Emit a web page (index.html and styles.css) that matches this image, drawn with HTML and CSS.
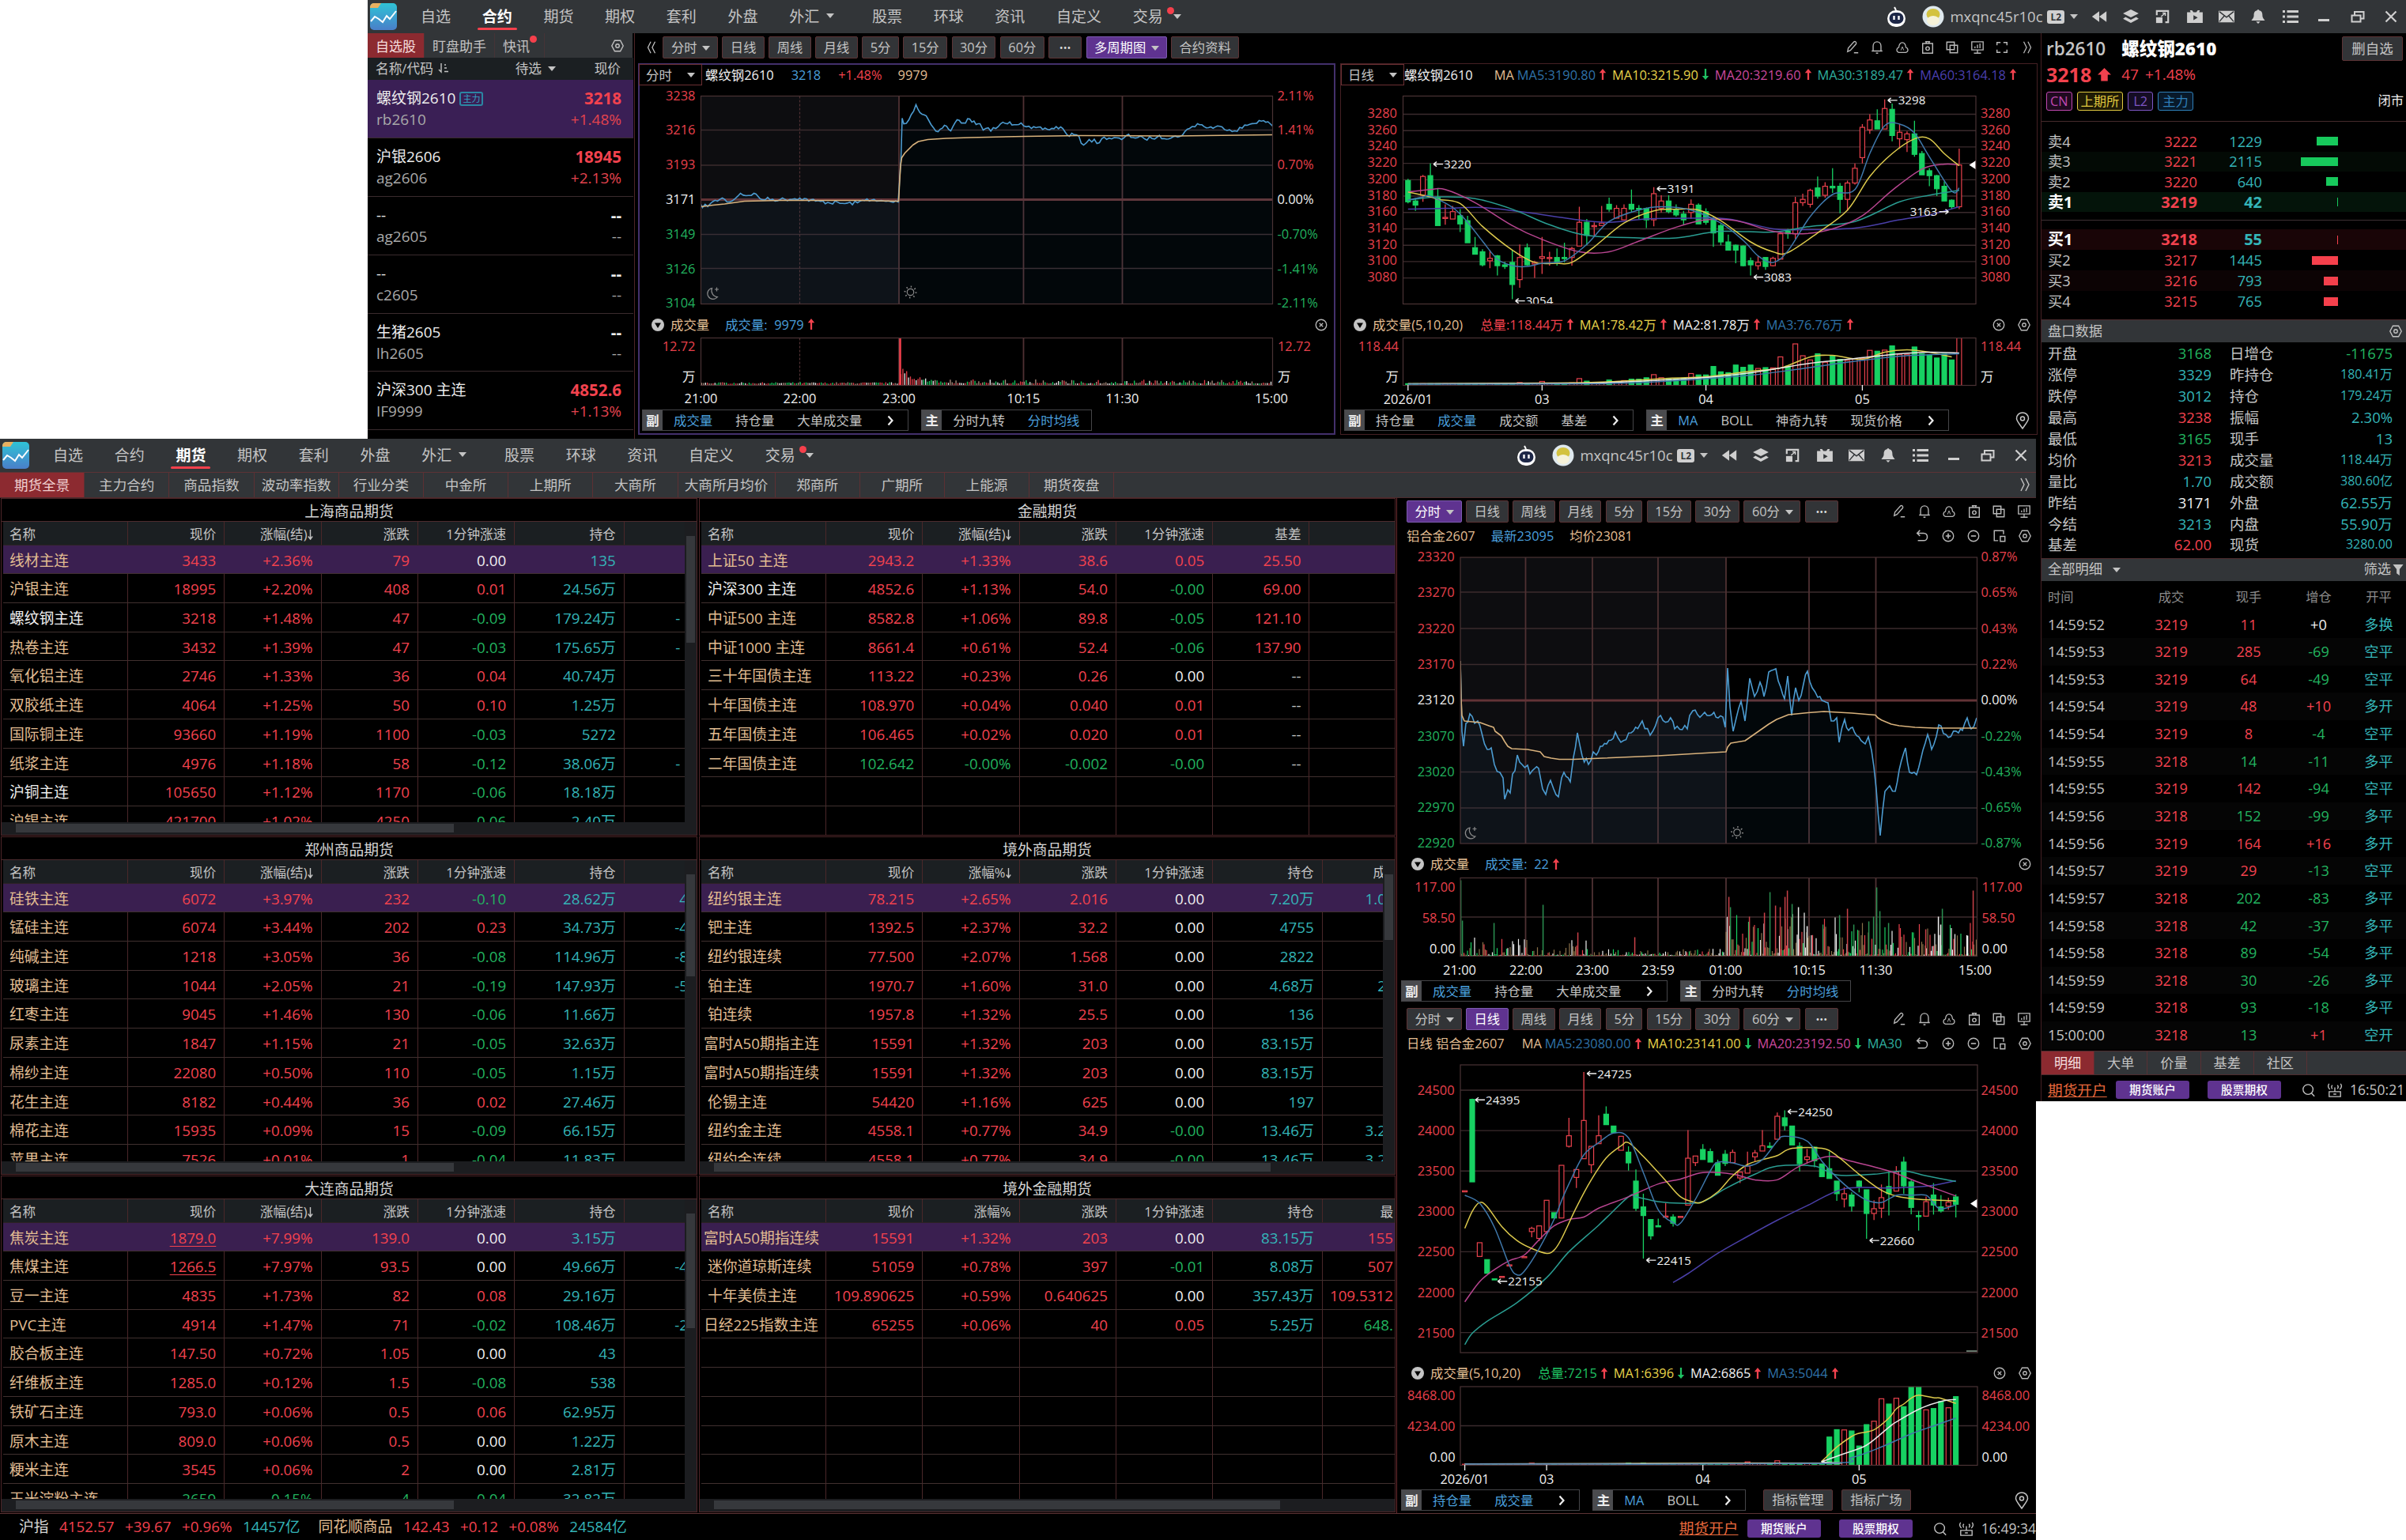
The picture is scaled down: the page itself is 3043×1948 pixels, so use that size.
FILE: index.html
```html
<!DOCTYPE html>
<html lang="zh-CN">
<head>
	<meta charset="utf-8">
	<title>期货行情</title>
	<link rel="stylesheet" href="styles.css">
</head>
<body>
<svg class="sprite" width="0" height="0">
	<defs>
		<linearGradient id="logoBg" x1="0" y1="0" x2="0" y2="1"><stop offset="0" stop-color="#2fc3d6"/><stop offset="1" stop-color="#4a7fc9"/></linearGradient>
	</defs>
	<symbol id="i-logo" viewBox="0 0 34 34"><rect width="34" height="34" rx="5" fill="url(#logoBg)"/><path d="M0 5a5 5 0 0 1 5-5h9l-4 6H0z" fill="#e8b060"/><path d="M1 23l5-6 5 3 5 4 5-8 4 4 8-10" fill="none" stroke="#fff" stroke-width="2"/></symbol>
	<symbol id="i-robot" viewBox="0 0 27 27"><path d="M13 5l-2-4" stroke="#fff" stroke-width="2"/><rect x="2" y="5" width="23" height="21" rx="10.5" fill="#fff"/><rect x="4.500" y="8" width="18" height="14" rx="7" fill="#1d2747"/><path d="M10.500 12v5M16.500 12v5" stroke="#fff" stroke-width="2.400"/></symbol>
	<symbol id="i-avatar" viewBox="0 0 28 28"><circle cx="14" cy="14" r="13.500" fill="#dfe9ee"/><ellipse cx="14" cy="11" rx="8.500" ry="7" fill="#d3c23f"/><ellipse cx="14" cy="19" rx="8" ry="6" fill="#f6f2d8"/></symbol>
	<symbol id="i-back" viewBox="0 0 24 20"><path d="M12 2v16L1 10zM23 2v16L12 10z"/></symbol>
	<symbol id="i-layers" viewBox="0 0 22 20"><path d="M11 0l11 5.500-11 5.500L0 5.500z"/><path d="M3.500 10.500L11 14.500l7.500-4L22 13l-11 6L0 13z"/></symbol>
	<symbol id="i-app" viewBox="0 0 20 20"><path d="M2 8V2h16v16h-4" fill="none" stroke="currentColor" stroke-width="2.400"/><path d="M1 11h9v8H1z"/><path d="M8 10l6-5M14 9V5h-4" fill="none" stroke="currentColor" stroke-width="1.600"/></symbol>
	<symbol id="i-tv" viewBox="0 0 22 20"><path fill-rule="evenodd" d="M0 4h5L4 1h3l2 3h4l2-3h3l-1 3h5v15H0zM9 8v7l6-3.500z"/></symbol>
	<symbol id="i-mail" viewBox="0 0 22 18"><path fill-rule="evenodd" d="M0 1h22v16H0z"/><path d="M1 2l10 8L21 2M1 16l7-8M21 16l-7-8" fill="none" stroke="#323538" stroke-width="1.600"/></symbol>
	<symbol id="i-bellf" viewBox="0 0 20 20"><path d="M10 0c1 0 1.500 1 1.500 1.500C15 2 16 5 16 8c0 4 2 5 3.500 7.500H.5C2 13 4 12 4 8c0-3 1-6 4.500-6.500C8.500 1 9 0 10 0zM7 17h6l-3 3z"/></symbol>
	<symbol id="i-list" viewBox="0 0 20 18"><path d="M0 1h3v3H0zM0 7.500h3v3H0zM0 14h3v3H0zM5.500 1H20v3H5.500zM5.500 7.500H20v3H5.500zM5.500 14H20v3H5.500z"/></symbol>
	<symbol id="i-min" viewBox="0 0 16 16"><path d="M1 11h14v3H1z"/></symbol>
	<symbol id="i-restore" viewBox="0 0 18 16"><path d="M1.500 6.500h11v8h-11zM5 6V2h11.500v8.500H13" fill="none" stroke="currentColor" stroke-width="2"/></symbol>
	<symbol id="i-close" viewBox="0 0 16 16"><path d="M1.500 1.500l13 13M14.500 1.500l-13 13" fill="none" stroke="currentColor" stroke-width="2.200"/></symbol>
	<symbol id="i-pen" viewBox="0 0 20 20"><path d="M3 16l1-5 8-9c2-1 4 1 3 3l-8 9zM12 17.500h6" fill="none" stroke="currentColor" stroke-width="1.500"/></symbol>
	<symbol id="i-bell" viewBox="0 0 20 20"><path d="M2.500 15h15M4.500 15V8c0-8 11-8 11 0v7M8.500 18h3" fill="none" stroke="currentColor" stroke-width="1.500"/></symbol>
	<symbol id="i-cloud" viewBox="0 0 20 20"><path d="M5 17c-4-1-3.500-6 0-7C6 1 14 1 15 10c3.500 1 4 6 0 7z" fill="none" stroke="currentColor" stroke-width="1.400"/><path d="M8 14l2-5 2 5" fill="none" stroke="currentColor"/></symbol>
	<symbol id="i-shot" viewBox="0 0 20 20"><path d="M3 4.500h14V18H3zM6.500 2h7M8 2v3M12 2v3" fill="none" stroke="currentColor" stroke-width="1.600"/><circle cx="10" cy="11.500" r="2.500" fill="none" stroke="currentColor" stroke-width="1.600"/></symbol>
	<symbol id="i-copy" viewBox="0 0 20 20"><path d="M2.500 2.500H13V13H2.500zM7 7h10.500v10.500H7z" fill="none" stroke="currentColor" stroke-width="1.600"/></symbol>
	<symbol id="i-screen" viewBox="0 0 20 20"><path d="M2 2h16v11.500H2zM5 18h10M10 14v4M6.500 11V8.500M10 11V6M13.500 11V4.500" fill="none" stroke="currentColor" stroke-width="1.500"/></symbol>
	<symbol id="i-expand" viewBox="0 0 20 20"><path d="M3 7V3h5M12 3h5v4M3 13v4h5M12 17h5v-4" fill="none" stroke="currentColor" stroke-width="1.600"/></symbol>
	<symbol id="i-right2" viewBox="0 0 20 20"><path d="M5 2l4 8-4 8M11 2l4 8-4 8" fill="none" stroke="currentColor" stroke-width="1.400"/></symbol>
	<symbol id="i-left2" viewBox="0 0 20 20"><path d="M9 2l-4 8 4 8M15 2l-4 8 4 8" fill="none" stroke="currentColor" stroke-width="1.400"/></symbol>
	<symbol id="i-hex" viewBox="0 0 20 20"><path d="M6 2.500h8l4 7.500-4 7.500H6L2 10z" fill="none" stroke="currentColor" stroke-width="1.500"/><circle cx="10" cy="10" r="2.500" fill="none" stroke="currentColor" stroke-width="1.500"/></symbol>
	<symbol id="i-cx" viewBox="0 0 20 20"><circle cx="10" cy="10" r="7.500" fill="none" stroke="currentColor" stroke-width="1.500"/><path d="M7.500 7.500l5 5M12.500 7.500l-5 5" stroke="currentColor" stroke-width="1.500"/></symbol>
	<symbol id="i-plus" viewBox="0 0 20 20"><circle cx="10" cy="10" r="7.500" fill="none" stroke="currentColor" stroke-width="1.500"/><path d="M6.500 10h7M10 6.500v7" stroke="currentColor" stroke-width="1.800"/></symbol>
	<symbol id="i-minus" viewBox="0 0 20 20"><circle cx="10" cy="10" r="7.500" fill="none" stroke="currentColor" stroke-width="1.500"/><path d="M6.500 10h7" stroke="currentColor" stroke-width="1.800"/></symbol>
	<symbol id="i-undo" viewBox="0 0 20 20"><path d="M7 2L3 6l4 4M3 6h9c7 0 7 10.500 0 10.500H4" fill="none" stroke="currentColor" stroke-width="1.700"/></symbol>
	<symbol id="i-pip" viewBox="0 0 20 20"><path d="M8 16.500H2.500v-14h13v5M11 10.500h6.500v7H11z" fill="none" stroke="currentColor" stroke-width="1.600"/></symbol>
	<symbol id="i-down" viewBox="0 0 16 16"><circle cx="8" cy="8" r="8"/><path d="M4 5.500h8L8 12z" fill="#000"/></symbol>
	<symbol id="i-chev" viewBox="0 0 14 16"><path d="M4.500 2.500l5 5.500-5 5.500" fill="none" stroke="currentColor" stroke-width="2.200"/></symbol>
	<symbol id="i-pin" viewBox="0 0 20 24"><path d="M10 22C5 15 2.500 12 2.500 9.500c0-10 15-10 15 0C17.500 12 15 15 10 22z" fill="none" stroke="currentColor" stroke-width="1.500"/><circle cx="10" cy="9.500" r="2.500" fill="none" stroke="currentColor" stroke-width="1.500"/></symbol>
	<symbol id="i-search" viewBox="0 0 20 20"><circle cx="9" cy="9" r="7" fill="none" stroke="currentColor" stroke-width="1.500"/><path d="M14 14.500l4 4" stroke="currentColor" stroke-width="1.600"/></symbol>
	<symbol id="i-net" viewBox="0 0 20 20"><path d="M2 19v-7h16v7zM10 12V6M6.500 8c-1.500-1.500-1.500-3.500 0-5M13.500 8c1.500-1.500 1.500-3.500 0-5M3 9C0 6 0 3.500 2 1M17 9c3-3 3-5.500 1-8M8 15.500h4" fill="none" stroke="currentColor" stroke-width="1.500"/></symbol>
	<symbol id="i-funnel" viewBox="0 0 14 16"><path d="M0 1h14L9 7.500V16l-4-3V7.500z"/></symbol>
	<symbol id="i-sort" viewBox="0 0 14 14"><path d="M4 1v11L1 9M8 3h2M8 7h3M8 11.500h5" fill="none" stroke="currentColor" stroke-width="1.400"/></symbol>
	<symbol id="i-srt" viewBox="0 0 7 14"><path d="M3.500 1v12L.8 9.500M3.500 13l2.700-3.500" fill="none" stroke="currentColor" stroke-width="1.400"/></symbol>
	<symbol id="i-up" viewBox="0 0 10 16"><path d="M5 0l4.500 5.500H6.200V15H3.800V5.500H.5z"/></symbol>
	<symbol id="i-dn" viewBox="0 0 10 16"><path d="M5 15L.5 9.500h3.300V0h2.400v9.500h3.300z"/></symbol>
	<symbol id="i-bigup" viewBox="0 0 18 18"><path d="M9 0l9 9h-4.500v8.500h-9V9H0z"/></symbol>
</svg>

<div class="desktop">

	<!-- 合约 -->
	<section class="win win-a">
		<header class="bar">
			<svg class="logo"><use href="#i-logo"/></svg>
			<nav class="menu">
				<a>自选</a><a class="cur">合约</a><a>期货</a><a>期权</a><a>套利</a><a>外盘</a><a class="more">外汇<i class="caret"></i></a><a>股票</a><a>环球</a><a>资讯</a><a>自定义</a><a class="trade">交易<i class="dot"></i><i class="caret"></i></a>
			</nav>
			<div class="user">
				<svg class="robot"><use href="#i-robot"/></svg>
				<svg class="avatar"><use href="#i-avatar"/></svg>
				<span class="name">mxqnc45r10c</span><b class="l2">L2</b><i class="caret"></i>
				<svg><use href="#i-back"/></svg><svg><use href="#i-layers"/></svg><svg><use href="#i-app"/></svg><svg><use href="#i-tv"/></svg><svg><use href="#i-mail"/></svg><svg><use href="#i-bellf"/></svg><svg><use href="#i-list"/></svg><svg class="ctl"><use href="#i-min"/></svg><svg class="ctl"><use href="#i-restore"/></svg><svg class="ctl"><use href="#i-close"/></svg>
			</div>
		</header>
		<div class="a-main">
			<aside class="watch">
				<div class="watch-tabs"><a class="on">自选股</a><a>盯盘助手</a><a class="news">快讯<i class="dot"></i></a><svg><use href="#i-hex"/></svg></div>
				<div class="watch-head"><span class="w-name">名称/代码<svg><use href="#i-sort"/></svg></span><span class="w-sel">待选<i class="caret"></i></span><span>现价</span></div>
				<div class="w-row sel"><div><p>螺纹钢2610<em>主力</em></p><small>rb2610</small></div><div class="up"><b>3218</b><small>+1.48%</small></div></div>
				<div class="w-row"><div><p>沪银2606</p><small>ag2606</small></div><div class="up"><b>18945</b><small>+2.13%</small></div></div>
				<div class="w-row"><div><p>--</p><small>ag2605</small></div><div><b>--</b><small>--</small></div></div>
				<div class="w-row"><div><p>--</p><small>c2605</small></div><div><b>--</b><small>--</small></div></div>
				<div class="w-row"><div><p>生猪2605</p><small>lh2605</small></div><div><b>--</b><small>--</small></div></div>
				<div class="w-row"><div><p>沪深300 主连</p><small>IF9999</small></div><div class="up"><b>4852.6</b><small>+1.13%</small></div></div>
			</aside>

			<div class="charts">
				<div class="periods">
					<svg class="fold"><use href="#i-left2"/></svg>
					<a>分时<i class="caret"></i></a><a>日线</a><a>周线</a><a>月线</a><a>5分</a><a>15分</a><a>30分</a><a>60分</a><a class="dots">•••</a><a class="on">多周期图<i class="caret"></i></a><a>合约资料</a>
					<div class="tools"><svg><use href="#i-pen"/></svg><svg><use href="#i-bell"/></svg><svg><use href="#i-cloud"/></svg><svg><use href="#i-shot"/></svg><svg><use href="#i-copy"/></svg><svg><use href="#i-screen"/></svg><svg><use href="#i-expand"/></svg><svg><use href="#i-right2"/></svg></div>
				</div>
				<div class="pair">
					<div class="chart active">
						<div class="legend"><span class="pick">分时<i class="caret"></i></span><span class="wt">螺纹钢2610</span><span class="bl g22">3218</span><span class="rd g22">+1.48%</span><span class="tan g20">9979</span></div>
						<svg id="timeA" class="h289"></svg>
						<div class="legend sub"><svg class="tog"><use href="#i-down"/></svg><span class="tan">成交量</span><span class="bl g20">成交量:&nbsp; 9979</span><svg class="ar rd"><use href="#i-up"/></svg><div class="tools"><svg><use href="#i-cx"/></svg></div></div>
						<svg id="volA" class="h92"></svg>
						<div class="opts-row">
							<div class="opts"><b>副</b><span class="bl">成交量</span><span>持仓量</span><span>大单成交量</span><svg><use href="#i-chev"/></svg></div>
							<div class="opts"><b>主</b><span>分时九转</span><span class="bl">分时均线</span></div>
						</div>
					</div>
					<div class="chart">
						<div class="legend"><span class="pick">日线<i class="caret"></i></span><span class="wt tight">螺纹钢2610</span><span class="tan g27">MA</span><span class="ma5 g4">MA5:3190.80</span><svg class="ar rd"><use href="#i-up"/></svg><span class="ma10">MA10:3215.90</span><svg class="ar gr"><use href="#i-dn"/></svg><span class="ma20">MA20:3219.60</span><svg class="ar rd"><use href="#i-up"/></svg><span class="ma30">MA30:3189.47</span><svg class="ar rd"><use href="#i-up"/></svg><span class="ma60">MA60:3164.18</span><svg class="ar rd"><use href="#i-up"/></svg></div>
						<svg id="klineA" class="h289"></svg>
						<div class="legend sub"><svg class="tog"><use href="#i-down"/></svg><span class="tan">成交量(5,10,20)</span><span class="rd g22">总量:118.44万</span><svg class="ar rd"><use href="#i-up"/></svg><span class="ma10">MA1:78.42万</span><svg class="ar rd"><use href="#i-up"/></svg><span class="wt">MA2:81.78万</span><svg class="ar rd"><use href="#i-up"/></svg><span class="ma5">MA3:76.76万</span><svg class="ar rd"><use href="#i-up"/></svg><div class="tools"><svg><use href="#i-cx"/></svg><svg><use href="#i-hex"/></svg></div></div>
						<svg id="kvolA" class="h92"></svg>
						<div class="opts-row">
							<div class="opts"><b>副</b><span>持仓量</span><span class="bl">成交量</span><span>成交额</span><span>基差</span><svg><use href="#i-chev"/></svg></div>
							<div class="opts"><b>主</b><span class="bl">MA</span><span>BOLL</span><span>神奇九转</span><span>现货价格</span><svg><use href="#i-chev"/></svg></div>
							<svg class="pin"><use href="#i-pin"/></svg>
						</div>
					</div>
				</div>
			</div>

			<aside class="quote">
				<div class="q-title"><span>rb2610</span><b>螺纹钢2610</b><a>删自选</a></div>
				<div class="q-price"><b>3218</b><svg><use href="#i-bigup"/></svg><span>47</span><span>+1.48%</span></div>
				<div class="q-tags"><i class="t-cn">CN</i><i class="t-ex">上期所</i><i class="t-l2">L2</i><i class="t-main">主力</i><span>闭市</span></div>
				<div id="asks" class="levels"></div>
				<div id="bids" class="levels bids"></div>
				<div class="q-sec">盘口数据<svg class="hex"><use href="#i-hex"/></svg></div>
				<div id="stats" class="stats"></div>
				<div class="q-sec">全部明细<i class="caret"></i><span class="filter">筛选<svg><use href="#i-funnel"/></svg></span></div>
				<div class="ticks">
					<div class="tick head"><span>时间</span><span>成交</span><span>现手</span><span>增仓</span><span>开平</span></div>
					<div id="ticks"></div>
				</div>
				<div class="q-tabs"><a class="on">明细</a><a>大单</a><a>价量</a><a>基差</a><a>社区</a></div>
				<div class="foot"><a class="open">期货开户</a><a class="btn">期货账户</a><a class="btn">股票期权</a><svg><use href="#i-search"/></svg><svg><use href="#i-net"/></svg><span>16:50:21</span></div>
			</aside>
		</div>
	</section>

	<!-- 期货 -->
	<section class="win win-b">
		<header class="bar">
			<svg class="logo"><use href="#i-logo"/></svg>
			<nav class="menu">
				<a>自选</a><a>合约</a><a class="cur">期货</a><a>期权</a><a>套利</a><a>外盘</a><a class="more">外汇<i class="caret"></i></a><a>股票</a><a>环球</a><a>资讯</a><a>自定义</a><a class="trade">交易<i class="dot"></i><i class="caret"></i></a>
			</nav>
			<div class="user">
				<svg class="robot"><use href="#i-robot"/></svg>
				<svg class="avatar"><use href="#i-avatar"/></svg>
				<span class="name">mxqnc45r10c</span><b class="l2">L2</b><i class="caret"></i>
				<svg><use href="#i-back"/></svg><svg><use href="#i-layers"/></svg><svg><use href="#i-app"/></svg><svg><use href="#i-tv"/></svg><svg><use href="#i-mail"/></svg><svg><use href="#i-bellf"/></svg><svg><use href="#i-list"/></svg><svg class="ctl"><use href="#i-min"/></svg><svg class="ctl"><use href="#i-restore"/></svg><svg class="ctl"><use href="#i-close"/></svg>
			</div>
		</header>
		<nav class="cats">
			<a class="on">期货全景</a><a>主力合约</a><a>商品指数</a><a>波动率指数</a><a>行业分类</a><a>中金所</a><a>上期所</a><a>大商所</a><a class="wide">大商所月均价</a><a>郑商所</a><a>广期所</a><a>上能源</a><a>期货夜盘</a>
			<svg><use href="#i-right2"/></svg>
		</nav>
		<div class="b-main">
			<div class="boards" id="boards"></div>
			<div class="side">
				<div class="periods">
					<a class="on">分时<i class="caret"></i></a><a>日线</a><a>周线</a><a>月线</a><a>5分</a><a>15分</a><a>30分</a><a>60分<i class="caret"></i></a><a class="dots">•••</a>
					<div class="tools"><svg><use href="#i-pen"/></svg><svg><use href="#i-bell"/></svg><svg><use href="#i-cloud"/></svg><svg><use href="#i-shot"/></svg><svg><use href="#i-copy"/></svg><svg><use href="#i-screen"/></svg></div>
				</div>
				<div class="legend info"><span class="tan">铝合金2607</span><span class="bl g20">最新23095</span><span class="tan g20">均价23081</span><div class="tools"><svg><use href="#i-undo"/></svg><svg><use href="#i-plus"/></svg><svg><use href="#i-minus"/></svg><svg><use href="#i-pip"/></svg><svg><use href="#i-hex"/></svg></div></div>
				<svg id="timeB" class="h388"></svg>
				<div class="legend sub"><svg class="tog"><use href="#i-down"/></svg><span class="tan">成交量</span><span class="bl g20">成交量:&nbsp; 22</span><svg class="ar rd"><use href="#i-up"/></svg><div class="tools"><svg><use href="#i-cx"/></svg></div></div>
				<svg id="volB" class="h133"></svg>
				<div class="opts-row">
					<div class="opts"><b>副</b><span class="bl">成交量</span><span>持仓量</span><span>大单成交量</span><svg><use href="#i-chev"/></svg></div>
					<div class="opts"><b>主</b><span>分时九转</span><span class="bl">分时均线</span></div>
				</div>
				<div class="periods second">
					<a>分时<i class="caret"></i></a><a class="on">日线</a><a>周线</a><a>月线</a><a>5分</a><a>15分</a><a>30分</a><a>60分<i class="caret"></i></a><a class="dots">•••</a>
					<div class="tools"><svg><use href="#i-pen"/></svg><svg><use href="#i-bell"/></svg><svg><use href="#i-cloud"/></svg><svg><use href="#i-shot"/></svg><svg><use href="#i-copy"/></svg><svg><use href="#i-screen"/></svg></div>
				</div>
				<div class="legend info"><span class="tan">日线 铝合金2607</span><span class="tan g22">MA</span><span class="ma5 g4">MA5:23080.00</span><svg class="ar rd"><use href="#i-up"/></svg><span class="ma10">MA10:23141.00</span><svg class="ar gr"><use href="#i-dn"/></svg><span class="ma20">MA20:23192.50</span><svg class="ar gr"><use href="#i-dn"/></svg><span class="ma30">MA30</span><div class="tools"><svg><use href="#i-undo"/></svg><svg><use href="#i-plus"/></svg><svg><use href="#i-minus"/></svg><svg><use href="#i-pip"/></svg><svg><use href="#i-hex"/></svg></div></div>
				<svg id="klineB" class="h390"></svg>
				<div class="legend sub"><svg class="tog"><use href="#i-down"/></svg><span class="tan">成交量(5,10,20)</span><span class="gr g22">总量:7215</span><svg class="ar rd"><use href="#i-up"/></svg><span class="ma10">MA1:6396</span><svg class="ar gr"><use href="#i-dn"/></svg><span class="wt">MA2:6865</span><svg class="ar rd"><use href="#i-up"/></svg><span class="ma5">MA3:5044</span><svg class="ar rd"><use href="#i-up"/></svg><div class="tools"><svg><use href="#i-cx"/></svg><svg><use href="#i-hex"/></svg></div></div>
				<svg id="kvolB" class="h133"></svg>
				<div class="opts-row">
					<div class="opts"><b>副</b><span class="bl">持仓量</span><span class="bl">成交量</span><svg><use href="#i-chev"/></svg></div>
					<div class="opts"><b>主</b><span class="bl">MA</span><span>BOLL</span><svg><use href="#i-chev"/></svg></div>
					<div class="mgr"><a>指标管理</a><a>指标广场</a></div>
					<svg class="pin"><use href="#i-pin"/></svg>
				</div>
			</div>
		</div>
		<footer class="status">
			<div class="index"><span class="lt">沪指</span><span class="up">4152.57</span><span class="up">+39.67</span><span class="up">+0.96%</span><span class="cy">14457亿</span></div>
			<div class="index"><span class="tan">同花顺商品</span><span class="up">142.43</span><span class="up">+0.12</span><span class="up">+0.08%</span><span class="cy">24584亿</span></div>
			<div class="foot"><a class="open">期货开户</a><a class="btn">期货账户</a><a class="btn">股票期权</a><svg><use href="#i-search"/></svg><svg><use href="#i-net"/></svg><span>16:49:34</span></div>
		</footer>
	</section>
</div>
<script src="main.js"></script>
</body>
</html>
```

FILE: styles.css
```css
* {
	margin: 0;
	padding: 0;
	box-sizing: border-box;
}
body {
	background: #fff;
	font-family: "Open Sans", "Noto Sans CJK SC", sans-serif;
	font-size: 19px;
	line-height: 1.2;
	color: #c4c4c4;
}
i, em {
	font-style: normal;
}
svg {
	display: block;
	fill: currentColor;
	flex: none;
}
.sprite {
	position: absolute;
}
.desktop {
	position: relative;
	width: 3043px;
	height: 1948px;
	overflow: hidden;
	white-space: nowrap;
}
.win {
	position: absolute;
	display: flex;
	flex-direction: column;
	background: #000;
	overflow: hidden;
}
.win-a {
	left: 465px;
	top: 0;
	width: 2578px;
	height: 1393px;
}
.win-b {
	left: 0;
	top: 555px;
	width: 2575px;
	height: 1393px;
}

/* colours */
.up, .rd { color: #f2424e; }
.down { color: #22b35f; }
.gr { color: #1fc162; }
.cy { color: #34b5b8; }
.bl { color: #4a9fdc; }
.wt { color: #f0f0f0; }
.lt { color: #d8d8d8; }
.tan { color: #e2bd92; }
.ma5 { color: #2f72a8; }
.ma10 { color: #e6d24a; }
.ma20 { color: #c9489c; }
.ma30 { color: #2fae9f; }
.ma60 { color: #4a3fae; }
.g4 { margin-left: 4px; }
.g20 { margin-left: 20px; }
.g22 { margin-left: 22px; }
.g27 { margin-left: 27px; }

.caret {
	display: inline-block;
	width: 0;
	height: 0;
	border: 5px solid transparent;
	border-top: 6px solid #c4c4c4;
	border-bottom: 0;
}
.dot {
	position: absolute;
	width: 9px;
	height: 9px;
	border-radius: 50%;
	background: #f5404c;
}

/* title bar */
.bar {
	display: flex;
	align-items: center;
	height: 42px;
	flex: none;
	background: #323538;
	padding-left: 3px;
}
.logo {
	width: 34px;
	height: 34px;
}
.menu {
	display: flex;
	gap: 39.7px;
	margin-left: 30px;
	height: 42px;
}
.menu a {
	position: relative;
	line-height: 42px;
}
.menu .cur {
	color: #fff;
	font-weight: bold;
}
.menu .cur::after {
	content: "";
	position: absolute;
	left: -6px;
	right: -6px;
	top: 35px;
	height: 3px;
	border-radius: 2px;
	background: #f5404c;
}
.menu .more .caret {
	margin: 0 8px 5px 9px;
}
.menu .trade .dot {
	left: 43px;
	top: 9px;
}
.menu .trade .caret {
	margin: 0 0 4px 13px;
}
.user {
	margin-left: auto;
	display: flex;
	align-items: center;
	padding-right: 9px;
}
.user svg {
	width: 20px;
	height: 18px;
	margin-left: 20.3px;
	color: #cfcfcf;
}
.user .robot {
	width: 27px;
	height: 27px;
	margin: 0;
}
.user .avatar {
	width: 28px;
	height: 28px;
	margin: 0 7px 0 19px;
}
.user .name {
	width: 119px;
	font-size: 18.5px;
}
.user .l2 {
	width: 22px;
	height: 17px;
	margin-left: 4px;
	border-radius: 3px;
	background: #d0d0d0;
	color: #323538;
	font-size: 12px;
	line-height: 17px;
	text-align: center;
}
.user .caret {
	margin-left: 7px;
	margin-right: -4px;
}
.user .ctl {
	height: 16px;
	margin-left: 22.5px;
}

/* window A */
.a-main {
	display: flex;
	flex: 1;
}
.watch {
	width: 338px;
	border-right: 1px solid #4d2427;
	padding-right: 1px;
}
.watch-tabs {
	display: flex;
	height: 31px;
	background: #323538;
	font-size: 17px;
	line-height: 33px;
	margin-right: 1px;
}
.watch-tabs a {
	position: relative;
	padding: 0 10px;
	border-right: 1px solid #453437;
}
.watch-tabs .on {
	background: #8c2a30;
	color: #f5dede;
}
.watch-tabs .news {
	padding-right: 18px;
}
.watch-tabs .dot {
	left: 44px;
	top: 3px;
}
.watch-tabs svg {
	width: 18px;
	height: 18px;
	margin: 7px 10px 0 auto;
}
.watch-head {
	display: flex;
	justify-content: space-between;
	height: 28px;
	padding: 0 16px 0 10px;
	background: #1b1f22;
	font-size: 16.7px;
	line-height: 28px;
}
.watch-head svg {
	display: inline-block;
	width: 14px;
	height: 14px;
	margin-left: 6px;
}
.w-sel .caret {
	margin: 0 0 3px 8px;
}
.w-name {
	width: 128px;
}
.w-row {
	display: flex;
	justify-content: space-between;
	height: 73.9px;
	padding: 10px 15px 0 11px;
	border-bottom: 1px solid #3a2b2d;
	color: #ededed;
	line-height: 27px;
}
.w-row.sel {
	background: #3a1f55;
}
.w-row p {
	display: flex;
	align-items: center;
	height: 27px;
}
.w-row em {
	margin-left: 5px;
	padding: 0 2px;
	border: 2px solid #2b86a3;
	border-radius: 3px;
	color: #35a3c4;
	font-size: 11px;
	line-height: 14px;
}
.w-row small {
	display: block;
	font-size: 19px;
	color: #a9a9a9;
}
.w-row > div:last-child {
	text-align: right;
}
.w-row b {
	display: block;
	font-size: 20.5px;
}
.w-row .up small {
	color: #e2434e;
}
.charts {
	width: 1775px;
	padding-left: 4px;
}
.periods {
	display: flex;
	align-items: center;
	gap: 5.4px;
	height: 38px;
	padding: 0 4px 3px 0;
	font-size: 16.3px;
}
.periods > a {
	height: 28px;
	padding: 0 9.5px;
	border: 1px solid #5c3335;
	border-radius: 2px;
	background: #323437;
	line-height: 27px;
}
.periods .caret {
	margin: 0 -1px 2px 7px;
}
.periods > a.on {
	border-color: #7d5bb0;
	background: #5f3390;
	color: #fff;
}
.periods > a.dots {
	width: 42px;
	padding: 0;
	font-size: 13px;
	color: #ddd;
	text-align: center;
}
.fold {
	width: 20px;
	height: 18px;
	margin: 0 -1px 0 7px;
}
.tools {
	display: flex;
	gap: 11.6px;
	margin-left: auto;
}
.tools svg {
	width: 20px;
	height: 18px;
	color: #b8b8b8;
}
.pair {
	display: flex;
	gap: 6px;
}
.pair .legend {
	height: 27px;
}
.chart {
	width: 882px;
	height: 470px;
	border: 1px solid #452024;
}
.chart.active {
	border: 2px solid #43306c;
}
.chart.active > * {
	margin-left: -1px;
}
.chart.active .legend {
	margin-top: -1px;
}
.chart .legend.sub {
	height: 28px;
}
.chart.active .legend.sub {
	margin-top: 0;
}
.chart svg[id], .side > svg {
	width: 100%;
}
.h289 { height: 289px; }
.h92 { height: 92px; }
.h388 { height: 388px; }
.h390 { height: 390px; }
.h133 { height: 133px; }
.legend {
	display: flex;
	align-items: center;
	height: 28px;
	font-size: 16.4px;
}
.pick {
	display: flex;
	align-items: center;
	justify-content: space-between;
	width: 80px;
	height: 27px;
	margin-right: 4px;
	padding: 0 8px;
	border: 1px solid #6b2f33;
}
.tight {
	margin-left: -4px;
}
.ar {
	width: 10px;
	height: 15px;
	margin: 0 7px 0 4px;
}
.legend.sub {
	padding-left: 16px;
	padding-bottom: 1px;
}
.tog {
	width: 16px;
	height: 16px;
	margin-right: 8px;
}
.sub .tools {
	padding-right: 6px;
}
.opts-row {
	display: flex;
	align-items: center;
	gap: 16px;
	height: 27px;
	padding-left: 4px;
}
.pair .opts-row {
	margin-top: 1px;
}
.opts {
	display: flex;
	align-items: center;
	gap: 29px;
	height: 27px;
	padding-right: 15px;
	border: 1px solid #454548;
	font-size: 16.4px;
}
.opts b {
	width: 25px;
	height: 25px;
	margin-right: -15px;
	background: #4a4b4e;
	color: #eee;
	line-height: 25px;
	text-align: center;
}
.opts svg {
	width: 14px;
	height: 16px;
	color: #eee;
}
.pin {
	width: 20px;
	height: 24px;
	margin-left: auto;
	margin-right: 8px;
}

/* quote column */
.quote {
	width: 462px;
	margin-left: 3px;
	border-left: 1px solid #452024;
	display: flex;
	flex-direction: column;
	font-size: 18.5px;
}
.q-title {
	display: flex;
	align-items: center;
	height: 36px;
	padding: 3px 4px 0 6px;
	font-size: 22.5px;
	font-weight: 600;
}
.q-title b {
	margin-left: 20px;
	color: #fff;
}
.q-title a {
	margin-left: auto;
	width: 77px;
	height: 31px;
	border: 1px solid #5c3335;
	background: #323437;
	border-radius: 2px;
	font-size: 17.5px;
	font-weight: normal;
	line-height: 29px;
	text-align: center;
}
.q-price {
	display: flex;
	align-items: center;
	gap: 8px;
	height: 32px;
	padding-left: 6px;
	color: #f2424e;
	font-size: 19px;
}
.q-price b {
	font-size: 25px;
}
.q-price svg {
	width: 17px;
	height: 17px;
}
.q-price span:first-of-type {
	margin-left: 5px;
}
.q-tags {
	display: flex;
	align-items: center;
	gap: 6px;
	height: 44px;
	padding: 0 3px 8px 6px;
	border-bottom: 1px solid #452a2c;
	font-size: 16.3px;
}
.q-tags i {
	height: 24px;
	padding: 0 4px;
	border: 1px solid;
	border-radius: 3px;
	line-height: 22px;
}
.q-tags .t-cn { color: #c048b0; background: #200a20; }
.q-tags .t-ex { color: #e0c93f; background: #1f1b05; }
.q-tags .t-l2 { color: #7d56c4; background: #150d24; padding: 0 6px; }
.q-tags .t-main { color: #2f7fb8; background: #08192a; padding: 0 5px; }
.q-tags span {
	margin-left: auto;
	color: #eee;
}
.levels {
	padding: 12px 0 10px;
	height: 125px;
	border-bottom: 1px solid #3c3033;
}
.level {
	display: grid;
	grid-template-columns: 92px 97px 82px 96px;
	align-items: center;
	height: 25.6px;
	padding-left: 8px;
	font-size: 18.3px;
}
.level span:nth-child(2), .level span:nth-child(3) {
	text-align: right;
}
.level .len {
	justify-self: end;
	height: 11px;
	background: #17c95c;
}
.level.best {
	font-size: 20px;
	font-weight: bold;
	color: #fff;
}
.level:nth-child(2) { background: #030a05; }
.level.best { background: #04140a; }
.bids .level:nth-child(2) { background: none; }
.bids .level:nth-child(3) { background: #0c0304; }
.bids .level.best { background: #190507; }
.bids .len { background: #f5404c; }
.bids {
	padding-top: 11px;
	height: 125px;
	border: 0;
}
.bids .level {
	height: 26.1px;
}
.q-sec {
	display: flex;
	align-items: center;
	height: 29px;
	padding: 0 3px 0 8px;
	border-top: 1px solid #4d2c2e;
	background: #323538;
	font-size: 17.3px;
	flex: none;
}
.q-sec .hex {
	width: 20px;
	height: 18px;
	margin-left: auto;
}
.q-sec .caret {
	margin-left: 13px;
}
.q-sec .filter {
	display: flex;
	align-items: center;
	margin-left: auto;
	gap: 2px;
}
.filter svg {
	width: 14px;
	height: 15px;
}
.stats {
	height: 272.5px;
}
.stat {
	display: grid;
	grid-template-columns: 92px 115px 23px 90px 116px;
	height: 26.95px;
	line-height: 27px;
	padding-left: 8px;
}
.stat span:nth-child(2), .stat span:nth-child(5) {
	text-align: right;
}
.stat .long {
	font-size: 16px;
}
.tick {
	display: grid;
	grid-template-columns: 114px 100px 96px 81px 71px;
	height: 34.65px;
	line-height: 35px;
	font-size: 18.2px;
	text-align: center;
}
.tick:nth-child(even) {
	background: #050505;
}
.tick span:first-child {
	padding-left: 8px;
	text-align: left;
}
.tick.head {
	height: 38px;
	line-height: 41px;
	font-size: 16.3px;
	color: #8b8b8b;
}
.q-tabs {
	display: flex;
	height: 31px;
	margin-top: 2px;
	border-top: 1px solid #4d2c2e;
	border-bottom: 1px solid #4d2c2e;
	background: #323538;
	font-size: 17.2px;
	line-height: 30px;
	text-align: center;
	flex: none;
}
.q-tabs a {
	width: 67.2px;
	border-right: 1px solid #573033;
}
.q-tabs .on {
	background: #8c2a30;
	color: #f5dede;
}
.foot {
	display: flex;
	align-items: center;
	height: 33px;
	padding-top: 5px;
	padding-left: 8px;
	font-size: 17.5px;
}
.foot .open {
	width: 75px;
	color: #e8683c;
	font-size: 18.7px;
	text-decoration: underline;
	margin-right: 11px;
}
.foot .btn {
	width: 93px;
	height: 23px;
	margin-right: 23px;
	border-radius: 3px;
	background: #5f3390;
	color: #fff;
	font-size: 14.7px;
	font-weight: 500;
	line-height: 22px;
	text-align: center;
}
.foot svg {
	width: 20px;
	height: 18px;
	margin-left: 2px;
	margin-right: 13px;
}
.foot svg + svg {
	margin-left: 0;
	margin-right: 9px;
}

/* window B */
.cats {
	display: flex;
	height: 33px;
	padding-right: 4px;
	border-top: 1px solid #5c3335;
	border-bottom: 1px solid #4d2c2e;
	background: #323538;
	font-size: 17.6px;
	line-height: 30px;
	text-align: center;
	flex: none;
}
.cats a {
	width: 107.2px;
	border-right: 1px solid #5c3033;
}
.cats .wide {
	width: 123px;
}
.cats .on {
	background: #8c2a30;
	color: #f0d0d0;
}
.cats svg {
	width: 20px;
	height: 20px;
	margin: 5px 0 0 auto;
}
.b-main {
	display: flex;
	height: 1285px;
	border-bottom: 1px solid #5c3335;
}
.boards {
	display: grid;
	grid-template-columns: 883px 883px;
	grid-template-rows: 428px 429px 427px;
	width: 1767px;
	border-right: 1px solid #6b2a2e;
}
.board {
	display: flex;
	flex-direction: column;
	margin: 0 1px 1px 1px;
	border: 1px solid #4d2528;
	overflow: hidden;
}
.board h2 {
	height: 29px;
	flex: none;
	font-size: 18.8px;
	font-weight: normal;
	line-height: 32px;
	color: #d5d5d5;
	text-align: center;
	border-bottom: 1px solid #4d2c2e;
}
.board-mid {
	display: flex;
	flex: 1;
	overflow: hidden;
}
.rows {
	flex: 1;
	overflow: hidden;
	padding-left: 2px;
}
.row {
	display: grid;
	grid-template-columns: 158px 122.3px 122.3px 122.3px 122.3px 138.5px 1fr;
	height: 36.7px;
	border-bottom: 1px solid #40302f;
	font-size: 18.8px;
	line-height: 39px;
	text-align: right;
}
.basis .row {
	grid-template-columns: 158px 122.3px 122.3px 122.3px 122.3px 122.3px 1fr;
}
.row span {
	height: 36px;
	padding-right: 10px;
	border-right: 1px solid #4a2729;
}
.row span:first-child {
	padding-left: 8px;
	text-align: left;
}
.row span.long {
	padding-left: 3px;
}
.row span:last-child {
	padding: 0;
	margin-right: -4px;
	border: 0;
}
.ends .row span:last-child {
	margin-right: 2px;
}
.row.head {
	height: 29.7px;
	background: #1b1f22;
	border-bottom: 1px solid #2d2225;
	font-size: 16.6px;
	line-height: 32px;
}
.row.head span {
	height: 29px;
}
.row.head svg {
	display: inline-block;
	width: 7px;
	height: 14px;
	margin-bottom: -1px;
}
.row.hl {
	background: #3a1f50;
}
.row.hl span {
	border-color: transparent;
}
.row .lim {
	text-decoration: underline;
	text-underline-offset: 3px;
}
.vbar {
	width: 15px;
	padding: 0 2px;
	background: #1c1d20;
}
.vbar i {
	display: block;
	width: 11px;
	margin-top: 18px;
	background: #36383c;
}
.hbar {
	height: 16px;
	padding: 2px 0 3px 18px;
	background: #1c1d20;
	flex: none;
}
.hbar i {
	display: block;
	height: 11px;
	background: #36383c;
}
.side {
	width: 808px;
	padding-left: 2px;
}
.side .periods {
	height: 34px;
	padding: 0 5px 0 10px;
}
.side .periods.second {
	margin-top: 4px;
	height: 35px;
}
.side .info {
	height: 28px;
	padding: 0 4px 0 10px;
}
.side .info .tools {
	gap: 12.4px;
}
.side .sub {
	height: 27px;
}
.side .sub .tools {
	padding-right: 4px;
	gap: 12.4px;
}
.side .opts-row {
	padding-left: 3px;
}
.mgr {
	display: flex;
	gap: 11px;
	margin-left: 6px;
	font-size: 16.3px;
}
.mgr a {
	width: 88px;
	height: 27px;
	border: 1px solid #5c3335;
	border-radius: 2px;
	background: #323437;
	line-height: 25px;
	text-align: center;
}
.status {
	display: flex;
	align-items: center;
	flex: 1;
	font-size: 18.8px;
}
.index {
	display: flex;
	gap: 13.500px;
	margin-left: 24px;
}
.index + .index {
	margin-left: 23px;
}
.status .foot {
	margin-left: auto;
	padding: 4px 0 0;
}

/* svg text */
.axis {
	font-size: 16.4px;
}
.note {
	font-size: 15.2px;
	fill: #f2f2f2;
}
```

FILE: main.js
```js
var NS = 'http://www.w3.org/2000/svg'
var RED = '#e8414c', GREEN = '#17d162', WHITE = '#f0f0f0'
var GRID = '#3b2b2d', VGRID = '#4f3133'

function add(parent, tag, attrs, text) {
	var el = document.createElementNS(NS, tag)
	for (var k in attrs) el.setAttribute(k, attrs[k])
	if (text !== undefined) el.textContent = text
	parent.appendChild(el)
	return el
}

// small seeded generator so the curves are the same on every load
var seed = 7
function rnd() {
	seed = (seed * 16807) % 2147483647
	return seed / 2147483647
}

function line(g, x1, y1, x2, y2, color, w, dash) {
	var a = { x1: x1, y1: y1, x2: x2, y2: y2, stroke: color, 'stroke-width': w || 1 }
	if (dash) a['stroke-dasharray'] = dash
	return add(g, 'line', a)
}

function label(svg, x, y, text, color, anchor) {
	add(svg, 'text', { x: x, y: y + 6, fill: color, 'text-anchor': anchor || 'start', 'class': 'axis' }, text)
}

// frame with its grid, returns the clipped inner area
function frame(id, x, y, w, h, rows, cols, shade) {
	var svg = document.getElementById(id)
	if (shade) add(svg, 'rect', { x: x, y: y, width: shade, height: h, fill: '#0d0d10' })
	var inner = add(svg, 'svg', { x: x, y: y, width: w, height: h, overflow: 'hidden' })
	rows.forEach(function (r) { line(inner, 0, r, w, r, GRID, 1.4) })
	cols.forEach(function (c) { line(inner, c[0], 0, c[0], h, VGRID, c[1] ? 1.2 : 1.8, c[1] ? '3 2' : '') })
	add(svg, 'rect', { x: x, y: y, width: w, height: h, fill: 'none', stroke: '#4a3234', 'stroke-width': 1.2 })
	return { svg: svg, g: inner, w: w, h: h }
}

function smooth(g, pts, color, w) {
	var d = 'M' + pts[0].join(' ')
	for (var i = 0; i < pts.length - 1; i++) {
		var a = pts[i - 1] || pts[i], b = pts[i], c = pts[i + 1], e = pts[i + 2] || c
		d += 'C' + [b[0] + (c[0] - a[0]) / 6, b[1] + (c[1] - a[1]) / 6, c[0] - (e[0] - b[0]) / 6, c[1] - (e[1] - b[1]) / 6, c[0], c[1]].map(function (n) { return n.toFixed(1) }).join(' ')
	}
	add(g, 'path', { d: d, fill: 'none', stroke: color, 'stroke-width': w || 1.5 })
}

// "x,y x,y ..." -> pairs
function pairs(s) {
	return s.trim().split(/\s+/).map(function (p) { return p.split(',').map(Number) })
}

function avgLine(g, s) {
	add(g, 'polyline', { points: s, fill: 'none', stroke: '#d9b27c', 'stroke-width': 1.6, 'stroke-linejoin': 'round' })
}

// price line of the day: straight runs with a little jitter
function dayLine(g, s, h, amp, step) {
	var pts = pairs(s), d = []
	for (var i = 0; i < pts.length - 1; i++) {
		var a = pts[i], b = pts[i + 1], n = Math.max(1, Math.round((b[0] - a[0]) / step))
		for (var k = 0; k < n; k++) {
			var j = k ? (rnd() - 0.5) * amp : 0
			d.push((a[0] + (b[0] - a[0]) * k / n).toFixed(1) + ' ' + (a[1] + (b[1] - a[1]) * k / n + j).toFixed(1))
		}
	}
	d.push(pts[pts.length - 1].join(' '))
	add(g, 'path', { d: 'M0 ' + h + 'L' + d.join('L') + 'V' + h + 'Z', fill: '#2a6fb0', 'fill-opacity': 0.06 })
	add(g, 'path', { d: 'M' + d.join('L'), fill: 'none', stroke: '#4c9bd0', 'stroke-width': 1.6 })
}

function moonSun(g, mx, my, sx, sy) {
	add(g, 'path', { d: 'M' + (mx - 1) + ' ' + (my - 7) + 'a7 7 0 1 0 7 11a8 8 0 0 1 -7 -11zM' + (mx + 5) + ' ' + (my - 8) + 'v5m-2.500-2.500h5', fill: 'none', stroke: '#8a8a8a', 'stroke-width': 1.2 })
	add(g, 'circle', { cx: sx, cy: sy, r: 4.2, fill: 'none', stroke: '#8a8a8a', 'stroke-width': 1.2 })
	add(g, 'circle', { cx: sx, cy: sy, r: 7, fill: 'none', stroke: '#8a8a8a', 'stroke-width': 2, 'stroke-dasharray': '1.400 4.100' })
}

function note(g, x, y, text, left) {
	if (left) {
		add(g, 'text', { x: x - 18, y: y + 5.5, 'text-anchor': 'end', 'class': 'note' }, text)
		add(g, 'path', { d: 'M' + (x - 4) + ' ' + y + 'h-12m12 0l-4-3m4 3l-4 3', stroke: WHITE, 'stroke-width': 1.4, fill: 'none' })
		return
	}
	add(g, 'path', { d: 'M' + (x + 4) + ' ' + y + 'h12m-12 0l4-3m-4 3l4 3', stroke: WHITE, 'stroke-width': 1.4, fill: 'none' })
	add(g, 'text', { x: x + 17, y: y + 5.5, 'class': 'note' }, text)
}

function candles(g, list, X, Y) {
	list.forEach(function (c, i) {
		if (!c) return
		var up = c[1] >= c[0], x = X(i), t = Y(Math.max(c[0], c[1])), b = Y(Math.min(c[0], c[1])), col = up ? RED : GREEN
		line(g, x, Y(c[2]), x, t, col, 1.3)
		line(g, x, b, x, Y(c[3]), col, 1.3)
		add(g, 'rect', { x: x - 3, y: t, width: 6, height: Math.max(1.4, b - t), fill: up ? '#000' : GREEN, stroke: col, 'stroke-width': 1.2 })
	})
}

function parseCandles(s) {
	return s.trim().split(/\s+/).map(function (r) { return r === '-' ? null : r.split(',').map(Number) })
}

/* ---- 螺纹钢 分时 ---- */
var a1 = frame('timeA', 78.5, 13.5, 723, 263, [43, 87.5, 175, 218], [[125, 1], [250.5], [408], [533]], 250.5)
line(a1.g, 0, 131, a1.w, 131, '#633336', 3)
dayLine(a1.g, '0,137 2,141 12,136 27,129 33,134 43,130 50,123 57,126 67,123 75,130 100,131 125,129 145,133 182,136 198,135 210,130 222,133 249.5,134 253,79 254.5,28 256.5,35 263,30 272,11 277,21 285,25 291,36 300,45 308,37 316,44 324,30 332,34 340,29 348,36 353,35 357,43 373,41 379,35 405,34 418,41 438,42 455,39 463,49 475,49 484,62 491,55 504,59 510,52 532,55 538,50 561,54 577,52 603,52 618,41 628,35 642,40 659,39 675,44 691,37 706,31 720,35 723,38', 263, 5, 3)
avgLine(a1.g, '0,140 15,138 30,136.5 55,133 100,132 200,132 250,133 251.5,105 252.5,88 254,78 258,72 263,67 268,62 275,57.5 287,55 310,53.5 340,52.5 410,51 479,50 602,50.5 723,49')
moonSun(a1.g, 15, 250, 265, 248)
;['3238,2.11%', '3216,1.41%', '3193,0.70%', '3171,0.00%', '3149,-0.70%', '3126,-1.41%', '3104,-2.11%'].forEach(function (t, i) {
	var p = t.split(','), y = 12.5 + i * 43.8, c = i < 3 ? RED : i === 3 ? WHITE : '#22b35f'
	label(a1.svg, 71.5, y, p[0], c, 'end')
	label(a1.svg, 807.5, y, p[1], c)
})

var a2 = frame('volA', 78.5, 2.5, 723, 60, [], [[125, 1], [250.5], [408], [533]])
for (var x = 1; x < 722; x += 2.4) {
	var base = 2 + rnd() * 2
	if (x > 252) base = 2.5 + 20 * Math.exp(-(x - 252) / 18) * (0.6 + rnd() * 0.5) + 5 * Math.pow(rnd(), 3)
	line(a2.g, x, 60 - base, x, 60, [RED, WHITE, '#b09080', GREEN][Math.floor(rnd() * (x > 252 && x < 275 ? 1.4 : 4))], 1.3)
}
line(a2.g, 252, 0, 252, 60, '#f5404c', 2.5)
label(a2.svg, 71.500, 13, '12.72', RED, 'end')
label(a2.svg, 71.500, 51, '万', WHITE, 'end')
label(a2.svg, 808, 13, '12.72', RED)
label(a2.svg, 808, 51, '万', WHITE)
;[[78.5, '21:00'], [203.5, '22:00'], [329, '23:00'], [486.5, '10:15'], [611.5, '11:30'], [800, '15:00']].forEach(function (t) {
	label(a2.svg, t[0], 79, t[1], WHITE, 'middle')
})

/* ---- 螺纹钢 日线 ---- */
function yA(p) { return 23 + (3280 - p) * 1.0355 }
function xA(i) { return 6.3 + i * 9.42 }
var rowsA = []
for (var p = 3280; p >= 3080; p -= 20) rowsA.push(yA(p))
var k1 = frame('klineA', 78.5, 13.5, 724.5, 263, rowsA, [])
candles(k1.g, parseCandles('3199,3173,3201,3171 3174,3169,3178,3162 3181,3204,3206,3173 3205,3179,3220,3178 3178,3144,3190,3144 3153,3154,3170,3145 3152,3161,3168,3152 3156,3146,3164,3136 3150,3123,3156,3123 3117,3109,3130,3109 3112,3096,3115,3094 3101,3104,3114,3092 3107,3095,3108,3083 3096,3094,3100,3091 3099,3072,3114,3054 3078,3105,3121,3068 3117,3096,3122,3095 3097,3099,3101,3080 3104,3106,3130,3085 3104,3105,3112,3095 3105,3099,3116,3095 3105,3104,3123,3099 3105,3116,3118,3095 3119,3148,3167,3119 3148,3132,3152,3120 3143,3144,3148,3131 3144,3147,3168,3144 3170,3164,3178,3161 3153,3165,3169,3153 3151,3165,3170,3151 3170,3164,3188,3160 3165,3164,3169,3152 3165,3151,3166,3141 3151,3183,3191,3143 3165,3174,3181,3160 3174,3161,3181,3159 3163,3157,3170,3155 3158,3151,3162,3145 3160,3170,3176,3152 3169,3146,3171,3146 3161,3148,3165,3145 3152,3135,3156,3118 3144,3124,3146,3120 3124,3114,3133,3114 3120,3114,3121,3098 3119,3095,3120,3094 3101,3096,3105,3083 3095,3099,3107,3090 3105,3094,3105,3090 3095,3104,3106,3094 3103,3134,3136,3103 3137,3134,3140,3128 3134,3172,3179,3128 3172,3176,3183,3168 3170,3187,3189,3166 3190,3180,3204,3177 3181,3192,3197,3178 3192,3190,3214,3184 3192,3176,3196,3159 3176,3196,3199,3162 3196,3214,3220,3194 3227,3264,3268,3220 3261,3273,3280,3256 3272,3262,3286,3262 3262,3287,3298,3262 3286,3254,3293,3247 3250,3258,3268,3238 3249,3256,3259,3234 3256,3231,3272,3228 3232,3206,3235,3206 3211,3205,3214,3192 3205,3189,3206,3180 3192,3174,3198,3174 3175,3167,3176,3164 3167,3218,3238,3164'), xA, yA)
function maLine(plot, s, X, Y, color) {
	smooth(plot.g, pairs(s).map(function (q) { return [X(q[0]), Y(q[1])] }), color, 1.5)
}
maLine(k1, '0,3164 5,3165 10,3166 16,3160 22,3152 27,3148 32,3152 38,3153 43,3152 49,3140 53,3139 60,3141 66,3151 70,3157 74,3167', xA, yA, '#4a3fa8')
maLine(k1, '0,3175 4,3179 9,3177 14,3164 19,3145 24,3132 31,3129 36,3129 42,3137 49,3136 54,3143 60,3149 66,3173 70,3181 74,3187', xA, yA, '#2a9d92')
maLine(k1, '0,3185 3,3188 5,3188 9,3172 14,3144 18,3127 23,3112 27,3112 31,3125 36,3142 40,3151 44,3150 49,3137 53,3134 57,3140 61,3156 65,3187 69,3213 72,3219 74,3218', xA, yA, '#b84590')
maLine(k1, '0,3185 3,3179 4,3176 7,3171 10,3143 14,3114 17,3099 20,3098 22,3099 25,3118 29,3147 33,3162 36,3164 39,3163 42,3150 46,3124 49,3112 51,3111 55,3135 59,3163 62,3204 65,3232 68,3250 70,3250 72,3232 74,3217', xA, yA, '#dcc94c')
maLine(k1, '0,3175 2,3179 3,3180 6,3166 8,3148 10,3125 12,3103 14,3095 16,3094 18,3098 21,3101 24,3121 27,3149 31,3163 34,3167 38,3163 42,3147 45,3126 47,3107 49,3099 51,3113 54,3155 57,3182 60,3188 62,3232 64,3266 66,3268 68,3257 70,3228 73,3186 74,3190', xA, yA, '#3f78ab')
note(k1.g, xA(3), yA(3219), '3220')
note(k1.g, xA(33), yA(3189), '3191')
note(k1.g, xA(64), yA(3297), '3298')
note(k1.g, xA(46), yA(3081), '3083')
note(k1.g, xA(14), yA(3052), '3054')
note(k1.g, xA(73), yA(3161), '3163', true)
add(k1.g, 'path', { d: 'M716 ' + yA(3218) + 'l9-6v12z', fill: '#fff' })
for (p = 3280; p >= 3080; p -= 20) {
	label(k1.svg, 71, yA(p) + 12, p, RED, 'end')
	label(k1.svg, 809, yA(p) + 12, p, RED)
}

function volBars(plot, vals, X, list, scale) {
	vals.forEach(function (v, i) {
		var up = list[i], h = v * scale
		add(plot.g, 'rect', { x: X(i) - 3, y: plot.h - h, width: 6, height: h, fill: up ? '#000' : GREEN, stroke: up ? RED : GREEN, 'stroke-width': 1.2 })
	})
}
function dirs(s) { return s.split('').map(function (c) { return c === 'r' }) }

var k2 = frame('kvolA', 78.5, 2.5, 724.5, 60, [], [])
volBars(k2, [6, 6, 6, 6, 6, 6, 6, 6, 6, 6, 6, 6, 6, 6, 6, 10, 6, 6, 14, 8, 8, 8, 9, 24, 15, 9, 9, 19, 14, 17, 22, 22, 27, 38, 27, 24, 24, 25, 42, 37, 37, 67, 48, 45, 72, 64, 72, 60, 63, 62, 101, 68, 147, 105, 90, 112, 82, 105, 92, 88, 95, 95, 124, 121, 125, 140, 110, 110, 136, 112, 108, 97, 112, 90, 168], xA, dirs('ggrggrrgggg' + 'rgggrgrrrgg' + 'rrgrrgrrggg' + 'rrgggrggggg' + 'gggrgrrgrrr' + 'grggrrrrgrg' + 'rrggggggr'), 60 / 168)
smooth(k2.g, pairs('0,58 20,57 28,55 35,51 40,49 46,42 50,38 54,24 57,22 61,27 64,18 67,15 70,18 73,24').map(function (q) { return [xA(q[0]), q[1]] }), '#dcc94c')
smooth(k2.g, pairs('0,58 20,57.5 28,56 40,50 46,44 50,38 54,32 60,26 66,20 70,18 74,19').map(function (q) { return [xA(q[0]), q[1]] }), '#e8e8e8')
smooth(k2.g, pairs('0,58.500 25,58 36,54 46,47 52,40 58,32 66,23 74,20').map(function (q) { return [xA(q[0]), q[1]] }), '#3f78ab')
label(k2.svg, 73, 13, '118.44', RED, 'end')
label(k2.svg, 73, 51, '万', WHITE, 'end')
label(k2.svg, 809, 13, '118.44', RED)
label(k2.svg, 809, 51, '万', WHITE)
;[[0, '2026/01'], [18, '03'], [40, '04'], [61, '05']].forEach(function (t) {
	var tx = 78.5 + xA(t[0])
	line(k2.svg, tx, 62, tx, 69, WHITE, 1.3)
	label(k2.svg, tx, 80, t[1], WHITE, 'middle')
})

/* ---- 铝合金 分时 ---- */
var colsB = [[82.5], [167], [250], [336], [441], [525.5]]
var rowsB = [44, 90, 135.5, 225, 271.5, 317]
var b1 = frame('timeB', 78, 13, 653.5, 362, rowsB, colsB, 336)
line(b1.g, 0, 181, b1.w, 181, '#633336', 3)
dayLine(b1.g, '0,131 2,220 4,239 7,210 12,198 18,210 22,207 27,222 34,243 39,241 43,262 50,272 54,279 56,306 60,294 63,298 66,274 69,270 72,250 78,262 85,263 88,274 94,267 99,267 104,293 108,300 114,282 118,293 124,303 128,279 131,272 139,284 143,253 148,222 154,251 162,262 168,246 172,250 177,239 185,236 196,221 203,234 216,222 230,207 240,225 250,203 269,208 271,217 287,217 290,200 294,194 300,199 318,199 326,203 332,202 335,215 338,140 341,189 345,220 349,203 355,182 360,207 366,153 372,176 379,158 384,176 390,145 399,141 405,164 410,179 414,150 419,200 424,165 428,181 434,160 439,144 445,165 452,177 460,182 465,184 469,207 476,203 479,234 486,205 491,219 496,215 504,227 512,236 516,227 520,244 523,265 526,293 531,352 537,296 543,289 550,296 555,269 563,241 568,272 577,275 585,244 591,224 596,243 605,212 614,224 630,222 635,219 641,203 646,217 653,203', 362, 9, 3)
avgLine(b1.g, '0,131 1,180 2,200 5,207 15,208 25,209 36,213 42,215 44,220 52,226 56,233 60,239 65,242 85,243 101,246 106,252 115,254 125,255.5 143,255.5 180,254 250,251 336,246 338,240 342,235 360,232 370,225 380,218 390,211 400,205 415,199 440,196.5 460,195 495,197 525,199.5 528,203 533,206 545,211 555,213 575,215 600,216 654,216')
moonSun(b1.g, 13, 349, 350, 348)
;['23320,0.87%', '23270,0.65%', '23220,0.43%', '23170,0.22%', '23120,0.00%', '23070,-0.22%', '23020,-0.43%', '22970,-0.65%', '22920,-0.87%'].forEach(function (t, i) {
	var q = t.split(','), y = 12 + i * 45.3, c = i < 4 ? RED : i === 4 ? WHITE : '#22b35f'
	label(b1.svg, 70.5, y, q[0], c, 'end')
	label(b1.svg, 736.5, y, q[1], c)
})

var b2 = frame('volB', 78, 3.5, 653.5, 99, [49.5], colsB)
for (x = 0; x < 653; x += 1.5) {
	var peak = x < 160 ? 22 : x < 335 ? 8 : x < 480 ? 55 : 42
	var vh = 1.5 + peak * Math.pow(rnd(), x > 335 ? 2.4 : 4)
	line(b2.g, x, 99 - vh, x, 99, [RED, GREEN, '#8a7048', '#8a7048', WHITE][Math.floor(rnd() * 5)], 1.2)
}
;['0,96,g', '2,45,g', '42,42,g', '104,65,g', '148,30,r', '220,24,r', '339,75,r', '341,62,g', '365,50,r', '384,55,r', '391,81,g', '398,64,r', '404,62,r', '410,75,r', '413,83,r', '419,66,g', '427,62,w', '438,38,w', '458,40,g', '479,52,g', '489,60,r', '497,40,g', '516,44,g', '522,50,g', '526,87,g', '530,57,g', '541,42,g', '588,34,r', '604,50,w', '607,40,w', '609,60,g', '641,26,w', '648,83,r'].forEach(function (t) {
	var q = t.split(',')
	line(b2.g, +q[0] + 0.6, 99 - q[1], +q[0] + 0.6, 99, { r: '#c94048', g: '#2a8f50', w: WHITE }[q[2]], 1.5)
})
;[['117.00', RED, 14.7], ['58.50', RED, 53.7], ['0.00', WHITE, 92.7]].forEach(function (t) {
	label(b2.svg, 71.5, t[2], t[0], t[1], 'end')
	label(b2.svg, 737.5, t[2], t[0], t[1])
})
;[[77, '21:00'], [161, '22:00'], [245, '23:00'], [328, '23:59'], [413.5, '01:00'], [519, '10:15'], [603.5, '11:30'], [729, '15:00']].forEach(function (t) {
	label(b2.svg, t[0], 119.5, t[1], WHITE, 'middle')
})

/* ---- 铝合金 日线 ---- */
function yB(q) { return 32 + (24500 - q) * 0.1022 }
function xB(i) { return 5.6 + i * 9.41 }
var rowsK = []
for (p = 24500; p >= 21500; p -= 500) rowsK.push(yB(p))
var k3 = frame('klineB', 78, 13, 654, 364, rowsK, [])
candles(k3.g, parseCandles('23250,23255,23255,23250 24386,23365,24395,23365 22442,22612,22612,22442 22403,22234,22403,22234 22165,22160,22165,22155 22190,22195,22195,22190 22335,22338,22338,22335 - 22438,22440,22440,22438 22750,22790,22810,22680 22665,22820,22820,22630 22750,23137,23137,22720 22984,22918,22984,22918 22918,23570,23570,22918 23805,23936,24157,23790 23420,23518,23518,23290 23652,24125,24725,23652 23577,23805,23805,23472 23838,23936,24190,23838 24203,24073,24300,24073 24056,23975,24056,23975 23756,23929,23929,23756 23733,23600,23805,23505 23375,23039,23518,23006 23055,22948,23219,22415 22899,22697,22899,22650 22822,22820,22910,22820 22935,22941,23104,22935 22931,22853,22964,22811 22935,22938,22938,22935 23078,23658,24007,23078 23603,23685,23685,23560 23766,23642,23831,23642 23740,23610,23779,23610 23600,23447,23640,23447 23707,23593,23760,23560 23603,23730,23765,23603 23414,23486,23486,23350 23473,23561,23740,23473 23675,23724,23760,23610 23747,23812,24007,23747 23806,23800,23855,23780 23893,24177,24223,23893 24158,24060,24250,24000 24056,23822,24056,23822 23805,23590,23855,23495 23642,23675,23773,23590 23795,23626,23800,23545 23587,23430,23587,23430 23528,23407,23740,23407 23375,23219,23375,23130 23153,23219,23300,23049 23202,23065,23235,22997 23375,23307,23385,23235 23267,22974,23267,22660 22974,23033,23137,22892 23039,23170,23333,22918 23307,23219,23500,22950 23251,23486,23560,23251 23610,23316,23675,23219 23365,23049,23385,22965 22948,22935,23006,22762 22941,23120,23185,22941 23202,23078,23350,22960 23055,23006,23202,22985 23065,23114,23170,23020 23179,23088,23210,22925'), xB, yB)
maLine(k3, '28,22120 30,22230 34,22480 38,22690 42,22890 46,23070 51,23280 57,23290 62,23310 66,23380', xB, yB, '#4a3fa8')
maLine(k3, '0,21350 1,21490 3,21640 7,21870 11,22180 14,22500 18,22830 22,23180 23,23180 26,23120 29,23100 32,23120 35,23280 39,23460 42,23560 47,23560 50,23450 55,23460 59,23500 62,23440 66,23370', xB, yB, '#2a9d92')
maLine(k3, '0,21880 2,22130 4,22280 6,22390 8,22460 10,22650 12,22820 14,22900 16,22930 18,23040 22,23180 26,23340 29,23400 32,23480 36,23460 39,23390 42,23390 45,23560 49,23680 52,23620 57,23500 61,23360 66,23190', xB, yB, '#b84590')
maLine(k3, '0,22790 1,23000 2,23110 3,23060 5,22810 7,22640 9,22540 11,22480 12,22520 13,22660 15,23050 17,23390 19,23660 21,23810 22,23850 24,23680 27,23380 29,23180 31,23110 32,23120 34,23240 36,23440 38,23580 40,23640 42,23690 44,23780 48,23780 50,23690 53,23460 56,23260 58,23190 61,23150 66,23130', xB, yB, '#dcc94c')
maLine(k3, '0,23200 2,23100 4,22800 6,22330 7,22215 8,22260 10,22540 12,22900 13,23130 14,23340 16,23700 18,23850 20,23970 22,23910 24,23480 26,23020 28,22860 29,22855 31,23150 33,23500 34,23610 36,23600 38,23560 40,23640 42,23870 43,23930 46,23870 48,23620 50,23420 52,23260 54,23140 56,23110 58,23200 60,23200 62,23200 63,23100 64,23030 66,23080', xB, yB, '#3f78ab')
note(k3.g, xB(1), yB(24380), '24395')
note(k3.g, xB(16), yB(24705), '24725')
note(k3.g, xB(43), yB(24235), '24250')
note(k3.g, xB(4), yB(22135), '22155')
note(k3.g, xB(24), yB(22395), '22415')
note(k3.g, xB(54), yB(22640), '22660')
add(k3.g, 'path', { d: 'M645 ' + yB(23095) + 'l9-6v12z', fill: '#fff' })
line(k3.g, 640, 362, 654, 362, '#8aa090', 1.5)
for (p = 24500; p >= 21500; p -= 500) {
	label(k3.svg, 70.5, yB(p) + 13, p, RED, 'end')
	label(k3.svg, 736.5, yB(p) + 13, p, RED)
}

var k4 = frame('kvolB', 78, 3, 654, 99.5, [49.5], [])
var vB = []
for (var i = 0; i < 49; i++) vB.push(i === 38 ? 13 : i === 42 ? 17 : i === 22 || i === 24 || i === 9 ? 8 : i > 37 ? 8 : 4)
vB = vB.concat([107, 135, 134, 130, 73, 154, 167, 252, 232, 254, 222, 298, 298, 210, 215, 242, 218, 260])
volBars(k4, vB, xB, dirs('rrrggrrrrrrrgrrrrrrggrgggggrgrrrgggg' + 'rrrrrgrgggrgg' + 'ggrggg' + 'rrgrggg' + 'rggrg'), 99.5 / 298)
function volPts(s) { return pairs(s).map(function (q) { return [xB(q[0]), 98 - q[1] / 3] }) }
smooth(k4.g, volPts('0,1 47,4 48,12 50,65 52,105 53,117 55,130 57,175 58,210 59,228 60,250 61,262 63,252 64,250 66,230'), '#dcc94c')
smooth(k4.g, volPts('0,1 47,3 48,10 51,40 54,72 57,140 58,160 61,208 64,238 66,245'), '#e8e8e8')
smooth(k4.g, volPts('0,0 47,2 52,25 56,65 60,115 63,145 66,175'), '#3f78ab')
;[['8468.00', RED, 14], ['4234.00', RED, 53], ['0.00', WHITE, 92]].forEach(function (t) {
	label(k4.svg, 71.5, t[2], t[0], t[1], 'end')
	label(k4.svg, 737.5, t[2], t[0], t[1])
})
;[[0, '2026/01'], [11, '03'], [32, '04'], [53, '05']].forEach(function (t) {
	var tx = 78 + xB(t[0])
	line(k4.svg, tx, 102, tx, 109, WHITE, 1.3)
	label(k4.svg, tx, 120, t[1], WHITE, 'middle')
})

/* ---- 盘口 ---- */
function levels(id, list) {
	document.getElementById(id).innerHTML = list.map(function (r) {
		return '<div class="level' + (/1$/.test(r[0]) ? ' best' : '') + '"><span>' + r[0] + '</span><span class="up">' + r[1] + '</span><span class="cy">' + r[2] + '</span><i class="len" style="width:' + r[3] + 'px"></i></div>'
	}).join('')
}
levels('asks', [['卖4', 3222, 1229, 27], ['卖3', 3221, 2115, 47], ['卖2', 3220, 640, 15], ['卖1', 3219, 42, 1]])
levels('bids', [['买1', 3218, 55, 1], ['买2', 3217, 1445, 33], ['买3', 3216, 793, 18], ['买4', 3215, 765, 18]])

document.getElementById('stats').innerHTML = [
	['开盘', '3168', 'down', '日增仓', '-11675', 'down'],
	['涨停', '3329', 'cy', '昨持仓', '180.41万', 'cy long'],
	['跌停', '3012', 'cy', '持仓', '179.24万', 'cy long'],
	['最高', '3238', 'up', '振幅', '2.30%', 'cy'],
	['最低', '3165', 'down', '现手', '13', 'cy'],
	['均价', '3213', 'up', '成交量', '118.44万', 'cy long'],
	['量比', '1.70', 'cy', '成交额', '380.60亿', 'cy long'],
	['昨结', '3171', 'wt', '外盘', '62.55万', 'cy'],
	['今结', '3213', 'cy', '内盘', '55.90万', 'cy'],
	['基差', '62.00', 'up', '现货', '3280.00', 'cy long']
].map(function (r) {
	return '<div class="stat"><span>' + r[0] + '</span><span class="' + r[2] + '">' + r[1] + '</span><span></span><span>' + r[3] + '</span><span class="' + r[5] + '">' + r[4] + '</span></div>'
}).join('')

document.getElementById('ticks').innerHTML = '14:59:52 3219 11 +0 多换|14:59:53 3219 285 -69 空平|14:59:53 3219 64 -49 空平|14:59:54 3219 48 +10 多开|14:59:54 3219 8 -4 空平|14:59:55 3218 14 -11 多平|14:59:55 3219 142 -94 空平|14:59:56 3218 152 -99 多平|14:59:56 3219 164 +16 多开|14:59:57 3219 29 -13 空平|14:59:57 3218 202 -83 多平|14:59:58 3218 42 -37 多平|14:59:58 3218 89 -54 多平|14:59:59 3218 30 -26 多平|14:59:59 3218 93 -18 多平|15:00:00 3218 13 +1 空开'.split('|').map(function (t) {
	var c = t.split(' ')
	var oi = c[3] === '+0' ? 'wt' : c[3][0] === '+' ? 'up' : 'down'
	return '<div class="tick"><span>' + c[0] + '</span><span class="up">' + c[1] + '</span><span class="' + (c[1] === '3219' ? 'up' : 'down') + '">' + c[2] + '</span><span class="' + oi + '">' + c[3] + '</span><span class="cy">' + c[4] + '</span></div>'
}).join('')

/* ---- 期货全景 ---- */
var SORT = '<svg><use href="#i-srt"/></svg>'
var boards = [
	{ title: '上海商品期货', pct: '涨幅(结)' + SORT, col: '持仓', v: 135, h: 554, ex: '', rows: '线材主连|3433|+2.36%|79|0.00|135|;沪银主连|18995|+2.20%|408|0.01|24.56万|;*螺纹钢主连|3218|+1.48%|47|-0.09|179.24万|-;热卷主连|3432|+1.39%|47|-0.03|175.65万|-;氧化铝主连|2746|+1.33%|36|0.04|40.74万|;双胶纸主连|4064|+1.25%|50|0.10|1.25万|;国际铜主连|93660|+1.19%|1100|-0.03|5272|;纸浆主连|4976|+1.18%|58|-0.12|38.06万|-;*沪铜主连|105650|+1.12%|1170|-0.06|18.18万|;沪锡主连|421700|+1.02%|4250|-0.06|2.40万|' },
	{ title: '金融期货', pct: '涨幅(结)' + SORT, col: '基差', cls: 'basis', ex: '', rows: '上证50 主连|2943.2|+1.33%|38.6|0.05|25.50|;*沪深300 主连|4852.6|+1.13%|54.0|-0.00|69.00|;中证500 主连|8582.8|+1.06%|89.8|-0.05|121.10|;中证1000 主连|8661.4|+0.61%|52.4|-0.06|137.90|;三十年国债主连|113.22|+0.23%|0.26|0.00|--|;十年国债主连|108.970|+0.04%|0.040|0.01|--|;五年国债主连|106.465|+0.02%|0.020|0.01|--|;二年国债主连|102.642|-0.00%|-0.002|-0.00|--|;;' },
	{ title: '郑州商品期货', pct: '涨幅(结)' + SORT, col: '持仓', v: 129, h: 554, ex: '', rows: '硅铁主连|6072|+3.97%|232|-0.10|28.62万|4;锰硅主连|6074|+3.44%|202|0.23|34.73万|-4;纯碱主连|1218|+3.05%|36|-0.08|114.96万|-8;玻璃主连|1044|+2.05%|21|-0.19|147.93万|-5;红枣主连|9045|+1.46%|130|-0.06|11.66万|;尿素主连|1847|+1.15%|21|-0.05|32.63万|;棉纱主连|22080|+0.50%|110|-0.05|1.15万|;花生主连|8182|+0.44%|36|0.02|27.46万|;棉花主连|15935|+0.09%|15|-0.09|66.15万|;苹果主连|7526|+0.01%|1|-0.04|11.83万|' },
	{ title: '境外商品期货', pct: '涨幅%' + SORT, col: '持仓', v: 83, h: 704, ex: '成', rows: '纽约银主连|78.215|+2.65%|2.016|0.00|7.20万|1.0;钯主连|1392.5|+2.37%|32.2|0.00|4755|;纽约银连续|77.500|+2.07%|1.568|0.00|2822|;铂主连|1970.7|+1.60%|31.0|0.00|4.68万|2;铂连续|1957.8|+1.32%|25.5|0.00|136|;富时A50期指主连|15591|+1.32%|203|0.00|83.15万|;富时A50期指连续|15591|+1.32%|203|0.00|83.15万|;伦锡主连|54420|+1.16%|625|0.00|197|;纽约金主连|4558.1|+0.77%|34.9|-0.00|13.46万|3.2;纽约金连续|4558.1|+0.77%|34.9|-0.00|13.46万|3.2' },
	{ title: '大连商品期货', pct: '涨幅(结)' + SORT, col: '持仓', v: 145, h: 554, ex: '', rows: '焦炭主连|_1879.0|+7.99%|139.0|0.00|3.15万|;焦煤主连|_1266.5|+7.97%|93.5|0.00|49.66万|-4;豆一主连|4835|+1.73%|82|0.08|29.16万|;PVC主连|4914|+1.47%|71|-0.02|108.46万|-2;胶合板主连|147.50|+0.72%|1.05|0.00|43|;纤维板主连|1285.0|+0.12%|1.5|-0.08|538|;铁矿石主连|793.0|+0.06%|0.5|0.06|62.95万|;原木主连|809.0|+0.06%|0.5|0.00|1.22万|;粳米主连|3545|+0.06%|2|0.00|2.81万|;玉米淀粉主连|2659|-0.15%|-4|-0.04|32.82万|' },
	{ title: '境外金融期货', pct: '涨幅%', col: '持仓', cls: 'ends', h: 716, ex: '最', rows: '富时A50期指连续|15591|+1.32%|203|0.00|83.15万|155;迷你道琼斯连续|51059|+0.78%|397|-0.01|8.08万|507;十年美债主连|109.890625|+0.59%|0.640625|0.00|357.43万|109.5312;日经225指数主连|65255|+0.06%|40|0.05|5.25万|648.;;;;;;' }
]
document.getElementById('boards').innerHTML = boards.map(function (b, n) {
	var html = '<div class="row head"><span>名称</span><span>现价</span><span>' + b.pct + '</span><span>涨跌</span><span>1分钟涨速</span><span>' + b.col + '</span><span>' + b.ex + '</span></div>'
	html += b.rows.split(';').map(function (r, i) {
		var c = r.split('|')
		while (c.length < 7) c.push('')
		var dir = c[2][0] === '-' ? 'down' : 'up'
		var nameCls = (c[0][0] === '*' ? 'wt' : 'tan') + (/期指|225/.test(c[0]) ? ' long' : '')
		var spd = c[4] === '0.00' ? 'wt' : c[4][0] === '-' ? 'down' : 'up'
		var last = c[5] === '--' ? '' : b.cls === 'basis' ? 'up' : 'cy'
		var ex = n < 5 ? 'cy' : i === 3 ? 'down' : 'up'
		if (c[6] === '-') c[6] = '-&nbsp;&nbsp;'
		return '<div class="row' + (i ? '' : ' hl') + '"><span class="' + nameCls + '">' + c[0].replace('*', '') + '</span><span class="' + dir + '">' + (c[1][0] === '_' ? '<u class="lim">' + c[1].slice(1) + '</u>' : c[1]) + '</span><span class="' + dir + '">' + c[2] + '</span><span class="' + dir + '">' + c[3] + '</span><span class="' + spd + '">' + c[4] + '</span><span class="' + last + '">' + c[5] + '</span><span class="' + ex + '">' + c[6] + '</span></div>'
	}).join('')
	return '<div class="board ' + (b.cls || '') + '"><h2>' + b.title + '</h2><div class="board-mid"><div class="rows">' + html + '</div>' +
		(b.v ? '<div class="vbar"><i style="height:' + b.v + 'px"></i></div>' : '') + '</div>' +
		(b.h ? '<div class="hbar"><i style="width:' + b.h + 'px"></i></div>' : '') + '</div>'
}).join('')
```
